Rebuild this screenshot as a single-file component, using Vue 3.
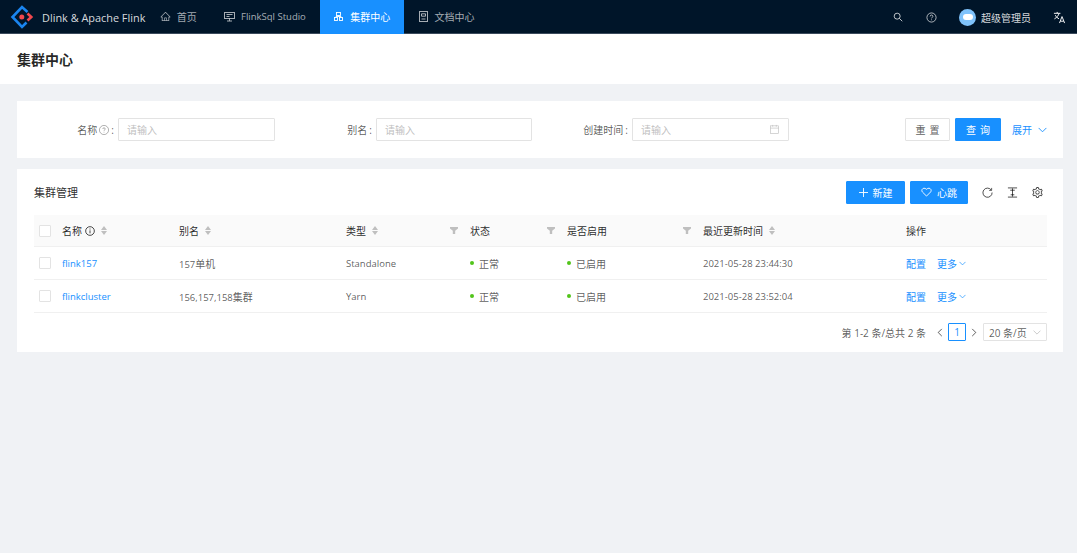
<script setup>
const navItems = [
  { label: '首页', icon: 'home' },
  { label: 'FlinkSql Studio', icon: 'desktop', latin: true },
  { label: '集群中心', icon: 'cluster', active: true },
  { label: '文档中心', icon: 'doc' },
]
const rows = [
  { name: 'flink157', aliasNum: '157', aliasCjk: '单机', type: 'Standalone', time: '2021-05-28 23:44:30' },
  { name: 'flinkcluster', aliasNum: '156,157,158', aliasCjk: '集群', type: 'Yarn', time: '2021-05-28 23:52:04' },
]
</script>

<template>
  <div class="page">
    <header class="topbar">
      <div class="brand">
        <svg class="logo" viewBox="0 0 24 24" width="24" height="24" fill="none" stroke-width="2.600">
          <path d="M17.500 7 12 2 2.500 12 12 22l4.500-4.500" stroke="#1a85f0" />
          <path d="m17.500 8.500 3.800 3.500-3.800 3.500" stroke="#f0484e" />
          <circle cx="11.800" cy="12" r="2.500" fill="#f0484e" stroke="none" />
        </svg>
        <span class="brand-name">Dlink &amp; Apache Flink</span>
      </div>
      <nav class="nav">
        <a v-for="item in navItems" :key="item.label" class="nav-item" :class="{ active: item.active }">
          <svg v-if="item.icon === 'home'" class="nav-icon" viewBox="0 0 1024 1024" fill="currentColor"><path d="M946.5 505L560.1 118.8l-25.9-25.9a31.5 31.5 0 0 0-44.4 0L77.5 505a63.9 63.9 0 0 0-18.8 46c.4 35.2 29.7 63.3 64.9 63.3h42.5V940h691.8V614.3h43.4c17.1 0 33.2-6.7 45.3-18.8a63.6 63.6 0 0 0 18.7-45.3c0-17-6.7-33.1-18.8-45.2zM568 868H456V664h112v204zm217.9-325.7V868H632V640c0-22.1-17.9-40-40-40H432c-22.1 0-40 17.9-40 40v228H238.1V542.3h-96l370-369.7 23.1 23.1L882 542.3h-96.1z" /></svg>
          <svg v-else-if="item.icon === 'desktop'" class="nav-icon" viewBox="0 0 11 11" fill="none" stroke="currentColor"><rect x=".5" y="1.500" width="10" height="6" /><path d="M2.500 3.500h6M2.500 5.500h3M5.500 7.500v2.300M3 10h5" /></svg>
          <svg v-else-if="item.icon === 'cluster'" class="nav-icon" viewBox="0 0 11 11" fill="none" stroke="currentColor" stroke-width=".9"><rect x="3.500" y="1.500" width="4" height="3" /><rect x="1.500" y="6.500" width="3" height="3" /><rect x="6.500" y="6.500" width="3" height="3" /><path d="M5.500 4.500v1M3 6.500V5.500h5v1" /></svg>
          <svg v-else class="nav-icon" viewBox="0 0 11 11" fill="none" stroke="currentColor"><rect x="1.500" y=".5" width="8" height="10" /><path d="M3.500 2.800h4v2.400h-4zM3.500 8h4" /></svg>
          <span :class="{ latin: item.latin }">{{ item.label }}</span>
        </a>
      </nav>
      <div class="top-right">
        <svg class="top-icon search" viewBox="0 0 12 12" fill="none" stroke="currentColor" stroke-width="1.100"><circle cx="5" cy="5" r="3.600" /><path d="m7.700 7.700 3.400 3.400" /></svg>
        <svg class="top-icon help" viewBox="0 0 12 12" fill="none" stroke="currentColor" stroke-width=".9"><circle cx="6" cy="6" r="5" /><path d="M4.500 4.800c0-2 3-2 3 0 0 1.100-1.500 1.100-1.500 2.200" /><path d="M6 8.100v.9" /></svg>
        <span class="avatar"><span class="avatar-cloud"></span></span>
        <span class="user">超级管理员</span>
        <svg class="top-icon lang" viewBox="0 0 14 14" fill="none" stroke="currentColor" stroke-width="1"><path d="M1 2.500h7M4.500 1v1.500M6.500 2.500C6 5 4 7 1.500 8.500M2.500 4.500C3.500 6.500 5 7.500 6.500 8.500" /><path d="M7 13l2.700-7 2.800 7M8 11h3.500" /></svg>
      </div>
    </header>

    <section class="page-head"><h1>集群中心</h1></section>

    <main class="content">
      <form class="card search-card" @submit.prevent>
        <label class="f-label">名称
          <svg class="q" viewBox="0 0 12 12" fill="none" stroke="currentColor" stroke-width=".8"><circle cx="6" cy="6" r="5.500" /><path d="M4.500 4.800c0-2 3-2 3 0 0 1.100-1.500 1.100-1.500 2.200M6 8.100v.9" /></svg>
          <span class="colon">:</span>
        </label>
        <div class="input">请输入</div>
        <label class="f-label">别名<span class="colon">:</span></label>
        <div class="input">请输入</div>
        <label class="f-label">创建时间<span class="colon">:</span></label>
        <div class="input date">请输入
          <svg class="cal" viewBox="0 0 12 12" fill="none" stroke="currentColor" stroke-width=".7"><rect x="1.500" y="2" width="9" height="8.500" /><path d="M1.500 4.500h9M4 1v2M8 1v2" /></svg>
        </div>
        <div class="actions">
          <button class="btn spaced">重置</button>
          <button class="btn primary query spaced">查询</button>
          <a class="expand">展开
            <svg viewBox="0 0 10 6" width="9" height="6" fill="none" stroke="currentColor"><path d="m.7.7 4.300 4.300L9.300.7" /></svg>
          </a>
        </div>
      </form>

      <section class="card table-card">
        <div class="toolbar">
          <span class="table-title">集群管理</span>
          <div class="tools">
            <button class="btn primary add">
              <svg viewBox="0 0 10 10" width="9" height="9" stroke="currentColor" stroke-width="1"><path d="M5 0v10M0 5h10" /></svg>
              新建
            </button>
            <button class="btn primary beat">
              <svg viewBox="0 0 12 11" width="11" height="10" fill="none" stroke="currentColor" stroke-width="1"><path d="M6 10 1.500 5.500C-.5 3 2.800-.5 6 2.500 9.200-.5 12.500 3 10.500 5.500z" /></svg>
              心跳
            </button>
            <svg class="tool reload" viewBox="0 0 12 12" fill="none" stroke="currentColor" stroke-width="1"><path d="M10 3.200A5 5 0 1 0 11 6" /><path d="M10.500 1v2.700H7.800" stroke-width=".9" /></svg>
            <svg class="tool height" viewBox="0 0 12 12" fill="none" stroke="currentColor" stroke-width="1"><path d="M1 1h10M1 11h10M6 1.500v9M3.500 3.500h5M4 8.500h4" /></svg>
            <svg class="tool gear" viewBox="60 60 904 904" fill="currentColor"><path d="M924.800 625.700l-65.500-56c3.100-19 4.700-38.400 4.700-57.800s-1.600-38.800-4.700-57.800l65.500-56a32.030 32.030 0 0 0 9.300-35.200l-.9-2.600a443.740 443.740 0 0 0-79.700-137.900l-1.800-2.100a32.120 32.120 0 0 0-35.100-9.500l-81.300 28.900c-30-24.600-63.500-44-99.700-57.600l-15.700-85a32.050 32.050 0 0 0-25.800-25.700l-2.700-.5c-52.100-9.400-106.900-9.400-159 0l-2.700.5a32.050 32.050 0 0 0-25.800 25.700l-15.800 85.400a351.860 351.860 0 0 0-99 57.400l-81.900-29.100a32 32 0 0 0-35.100 9.500l-1.800 2.100a446.020 446.020 0 0 0-79.700 137.900l-.9 2.600c-4.500 12.500-.8 26.500 9.300 35.200l66.300 56.600c-3.100 18.800-4.600 38-4.600 57.100 0 19.200 1.500 38.400 4.600 57.100L99 625.500a32.030 32.030 0 0 0-9.300 35.200l.9 2.600c18.100 50.400 44.900 96.900 79.700 137.900l1.800 2.100a32.120 32.120 0 0 0 35.100 9.500l81.900-29.100c29.800 24.500 63.100 43.900 99 57.400l15.800 85.400a32.050 32.050 0 0 0 25.800 25.700l2.700.5a449.400 449.400 0 0 0 159 0l2.700-.5a32.050 32.050 0 0 0 25.800-25.700l15.700-85a350 350 0 0 0 99.700-57.600l81.300 28.900a32 32 0 0 0 35.100-9.500l1.800-2.100c34.800-41.100 61.600-87.500 79.700-137.900l.9-2.600c4.500-12.300.8-26.300-9.300-35zM788.300 465.900c2.500 15.100 3.800 30.600 3.800 46.100s-1.300 31-3.800 46.100l-6.600 40.100 74.700 63.900a370.030 370.030 0 0 1-42.600 73.600L721 702.800l-31.400 25.800c-23.900 19.600-50.500 35-79.300 45.800l-38.100 14.300-17.900 97a377.500 377.500 0 0 1-85 0l-17.900-97.200-37.800-14.500c-28.500-10.800-55-26.200-78.700-45.700l-31.400-25.900-93.400 33.200c-17-22.900-31.200-47.600-42.600-73.600l75.500-64.500-6.500-40c-2.400-14.900-3.700-30.300-3.700-45.500 0-15.300 1.200-30.600 3.700-45.500l6.500-40-75.500-64.500c11.300-26.100 25.600-50.700 42.600-73.600l93.400 33.200 31.400-25.900c23.700-19.500 50.200-34.900 78.700-45.700l37.900-14.300 17.900-97.200c28.100-3.200 56.800-3.200 85 0l17.900 97 38.100 14.300c28.700 10.800 55.400 26.200 79.300 45.800l31.400 25.800 92.800-32.900c17 22.900 31.200 47.600 42.600 73.600L781.800 426l6.500 39.900zM512 326c-97.200 0-176 78.800-176 176s78.800 176 176 176 176-78.800 176-176-78.800-176-176-176zm79.200 255.200A111.600 111.600 0 0 1 512 614c-29.900 0-58-11.700-79.200-32.800A111.600 111.600 0 0 1 400 502c0-29.900 11.700-58 32.800-79.200C454 401.600 482.100 390 512 390c29.900 0 58 11.600 79.200 32.800A111.600 111.600 0 0 1 624 502c0 29.900-11.700 58-32.800 79.200z" /></svg>
          </div>
        </div>

        <div class="table">
          <div class="grid-row head">
            <span class="check"></span>
            <span class="th">名称
              <svg class="info" viewBox="0 0 12 12" fill="none" stroke="currentColor" stroke-width="1"><circle cx="6" cy="6" r="5.200" /><path d="M6 5.200v3.600M6 3v1.200" /></svg>
              <i class="sorter"></i>
            </span>
            <span class="th">别名<i class="sorter"></i></span>
            <span class="th filter-cell"><span>类型<i class="sorter"></i></span><i class="funnel"></i></span>
            <span class="th filter-cell"><span>状态</span><i class="funnel"></i></span>
            <span class="th filter-cell"><span>是否启用</span><i class="funnel"></i></span>
            <span class="th">最近更新时间<i class="sorter"></i></span>
            <span class="th">操作</span>
          </div>
          <div v-for="row in rows" :key="row.name" class="grid-row body">
            <span class="check"></span>
            <a class="link latin low">{{ row.name }}</a>
            <span><span class="latin">{{ row.aliasNum }}</span>{{ row.aliasCjk }}</span>
            <span class="latin low">{{ row.type }}</span>
            <span class="badge"><i class="dot"></i>正常</span>
            <span class="badge"><i class="dot"></i>已启用</span>
            <span class="latin low">{{ row.time }}</span>
            <span class="ops">
              <a class="link">配置</a>
              <a class="link more">更多
                <svg viewBox="0 0 10 6" width="7" height="5" fill="none" stroke="currentColor"><path d="m.7.7 4.300 4.300L9.300.7" /></svg>
              </a>
            </span>
          </div>
        </div>

        <div class="pager">
          <span class="total">第 1-2 条/总共 2 条</span>
          <svg class="arrow" viewBox="0 0 6 10" fill="none" stroke="currentColor"><path d="M5 1 1 5l4 4" /></svg>
          <span class="page-no">1</span>
          <svg class="arrow" viewBox="0 0 6 10" fill="none" stroke="currentColor"><path d="m1 1 4 4-4 4" /></svg>
          <span class="size">20 条/页
            <svg viewBox="0 0 10 6" width="8" height="5" fill="none" stroke="#bfbfbf"><path d="m.7.7 4.300 4.300L9.300.7" /></svg>
          </span>
        </div>
      </section>
    </main>
  </div>
</template>

<style>
html, body { margin: 0; background: #f0f2f5; }
</style>

<style scoped>
* { box-sizing: border-box; }
.page {
  width: 1077px;
  height: 553px;
  overflow: hidden;
  background: #f0f2f5;
  font-family: "Open Sans", "Noto Sans CJK SC", sans-serif;
  font-size: 10px;
  color: rgba(0, 0, 0, .65);
}
.latin { font-size: 9.500px; }
.low { padding-top: 1px; }
.topbar {
  height: 34px;
  display: flex;
  align-items: center;
  background: #001529;
  color: rgba(255, 255, 255, .65);
  box-shadow: inset 0 -1px 0 #3a4a5c;
}
.brand { display: flex; align-items: center; padding-left: 10px; width: 146px; flex: none; }
.logo { flex: none; }
.brand-name { margin-left: 8px; color: rgba(255, 255, 255, .85); font-size: 10.900px; font-weight: 500; white-space: nowrap; }
.nav { display: flex; height: 34px; margin-bottom: 1px; }
.nav-item { display: flex; align-items: center; gap: 6px; padding: 0 13.700px; white-space: nowrap; }
.nav-item.active { background: #1890ff; color: #fff; }
.nav-icon { width: 11px; height: 11px; flex: none; }
.top-right { margin-left: auto; display: flex; align-items: center; padding-right: 11px; }
.top-icon { flex: none; color: rgba(255, 255, 255, .8); }
.search { width: 10px; height: 10px; margin-right: 23px; }
.help { width: 11px; height: 11px; margin-right: 22px; }
.avatar {
  width: 17px; height: 17px; border-radius: 50%; background: #7ec2fb; flex: none;
  display: flex; align-items: center; justify-content: center;
}
.avatar-cloud { width: 10px; height: 6px; border-radius: 3px; background: #fff; }
.user { margin-left: 5px; color: rgba(255, 255, 255, .85); white-space: nowrap; }
.lang { width: 13px; height: 13px; margin-left: 22px; color: #fff; }

.page-head { height: 50px; background: #fff; padding: 0 17px; display: flex; align-items: center; }
h1 { margin: 0; font-size: 14px; font-weight: 600; color: rgba(0, 0, 0, .85); }

.content { padding: 17px 14px 0 17px; display: flex; flex-direction: column; gap: 11px; }
.card { background: #fff; }
.search-card {
  height: 57px;
  display: grid;
  grid-template-columns: 101px 157px 101px 156px 100px 157px 1fr;
  align-items: center;
}
.f-label { display: flex; align-items: center; justify-content: flex-end; white-space: nowrap; padding-right: 4px; }
.colon { margin-left: 2px; }
.q { width: 10px; height: 10px; margin-left: 2px; color: rgba(0, 0, 0, .45); }
.input {
  height: 23px; border: 1px solid #e3e3e3; border-radius: 1px; padding: 0 8px;
  display: flex; align-items: center; justify-content: space-between; color: #bfbfbf;
}
.cal { width: 11px; height: 11px; color: #bfbfbf; }
.actions { display: flex; align-items: center; justify-content: flex-end; padding-right: 16px; }
.btn {
  font: inherit; height: 23px; border: 1px solid #e3e3e3; border-radius: 1px; background: #fff;
  color: rgba(0, 0, 0, .65); display: inline-flex; align-items: center; justify-content: center; gap: 5px; padding: 0;
}
.btn.primary { background: #1890ff; border-color: #1890ff; color: #fff; }
.spaced { letter-spacing: 4px; padding-left: 4px; }
.actions .btn { width: 45px; }
.actions .query { width: 46px; margin-left: 5px; }
.expand { margin-left: 11px; color: #1890ff; display: flex; align-items: center; gap: 6px; }

.table-card { padding: 0 16px 0 17px; height: 183px; }
.toolbar { height: 46px; display: flex; align-items: center; justify-content: space-between; }
.table-title { font-size: 11px; color: rgba(0, 0, 0, .85); }
.tools { display: flex; align-items: center; padding-right: 4px; }
.add { width: 59px; }
.beat { width: 58px; margin-left: 5px; }
.tool { width: 11px; height: 11px; color: rgba(0, 0, 0, .75); margin-left: 14px; }
.reload { margin-left: 14px; }

.grid-row {
  display: grid;
  grid-template-columns: 28px 117px 167px 124px 97px 136px 203px 1fr;
  align-items: center;
  border-bottom: 1px solid #f0f0f0;
}
.grid-row.head { height: 32px; background: #fafafa; color: rgba(0, 0, 0, .85); }
.grid-row.body { height: 33px; }
.check {
  width: 12px; height: 12px; margin-left: 5px; background: #fff;
  border: 1px solid #e3e3e3; border-radius: 1px;
}
.th { display: flex; align-items: center; }
.info { width: 10px; height: 10px; margin-left: 3px; color: rgba(0, 0, 0, .85); }
.sorter { position: relative; display: inline-block; width: 6px; height: 9px; margin-left: 6px; }
.sorter::before, .sorter::after {
  content: ""; position: absolute; left: 0;
  border-left: 3px solid transparent; border-right: 3px solid transparent;
}
.sorter::before { top: 0; border-bottom: 4px solid #bfbfbf; }
.sorter::after { bottom: 0; border-top: 4px solid #bfbfbf; }
.filter-cell { justify-content: space-between; padding-right: 12px; }
.filter-cell > span { display: flex; align-items: center; }
.funnel {
  display: block; width: 8px; height: 7px; background: #bfbfbf;
  clip-path: polygon(0 0, 100% 0, 100% 20%, 65% 55%, 65% 100%, 35% 100%, 35% 55%, 0 20%);
}
.link { color: #1890ff; }
.badge { display: flex; align-items: center; gap: 5px; }
.dot { width: 4px; height: 4px; border-radius: 50%; background: #52c41a; }
.ops { display: flex; gap: 11px; }
.more { display: flex; align-items: center; gap: 2px; }

.pager { height: 38px; display: flex; align-items: center; justify-content: flex-end; }
.total { margin-right: 10px; }
.arrow { width: 6px; height: 9px; color: rgba(0, 0, 0, .7); margin: 0 1px; }
.page-no {
  width: 18px; height: 18px; margin: 0 4px; border: 1px solid #1890ff; border-radius: 1px;
  color: #1890ff; display: flex; align-items: center; justify-content: center;
}
.size {
  width: 64px; height: 18px; margin-left: 5px; border: 1px solid #e3e3e3; border-radius: 1px; padding: 0 5px;
  display: flex; align-items: center; justify-content: space-between;
}
</style>
